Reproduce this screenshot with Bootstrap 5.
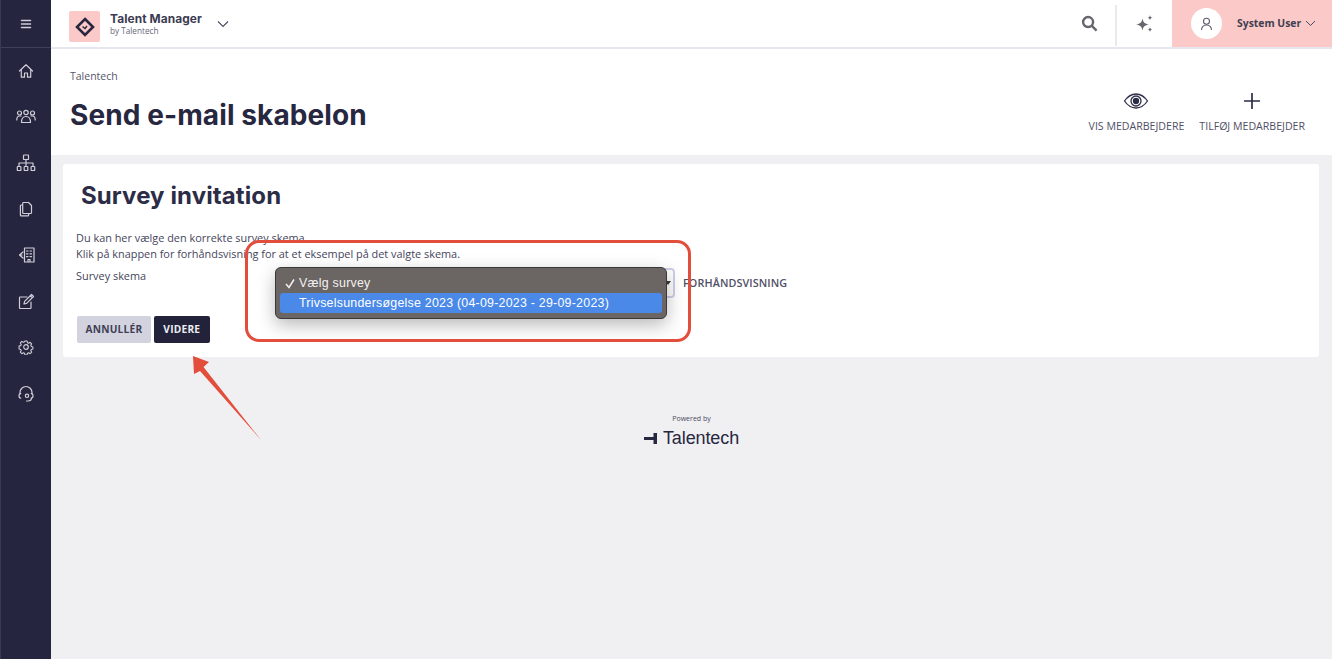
<!DOCTYPE html>
<html lang="da"><head><meta charset="utf-8"><title>Send e-mail skabelon</title>
<link href="https://cdn.jsdelivr.net/npm/bootstrap@5.3.0/dist/css/bootstrap.min.css" rel="stylesheet">
<style>
html,body{height:100%}
body{font-family:"Open Sans","Liberation Sans",sans-serif;color:#3f3f55;background:#f0f0f3;font-size:11px;overflow:hidden}
.app-shell{height:659px}
.side-rail{width:51px;background:#25253f;color:#cfcfd8;flex:none;border-left:1px solid #3a3a52}
.rail-top{height:48px;border-bottom:1px solid #3f3f5a}
.rail-item{height:46px;width:100%}
.side-rail svg{display:block;fill:none;stroke:currentColor;stroke-width:1.2;stroke-linecap:round;stroke-linejoin:round}
.top-bar{height:49px;background:#fff;border-bottom:2px solid #e6e6ee;padding-left:18px}
.logo-box{width:31px;height:31px;background:#fcc9c9;border-radius:2px;margin-top:6px}
.brand-text{margin-left:10px}
.brand-a{font:700 11.9px/13px Inter,sans-serif;color:#3b3b52;letter-spacing:.1px}
.brand-b{font-size:8.2px;line-height:10px;color:#66667a;margin-top:1px}
.brand-chev{margin-left:15px}
.top-ic{height:47px;color:#66666f}
.ic-search{width:56px;padding-left:4px}
.ic-spark{width:55px}
.top-div{border-left:2px solid #e9e9ee;height:41px;margin-top:3px}
.user-box{width:160px;height:47px;background:#fcc9c9;padding-left:19px;color:#3f3f50}
.user-dot{width:31px;height:31px;border-radius:50%;background:#fff;color:#5c5c70;margin-right:15px}
.user-name{font-weight:700;font-size:10.4px}
.page-head{height:106px;background:#fff;padding:20px 27px 0 19px}
.crumb{font-size:10.5px;line-height:15px;color:#55556a}
.page-title{font:700 28px/34px Inter,sans-serif;color:#27273f;margin:14px 0 0;letter-spacing:.1px}
.head-act{font-size:10.6px;line-height:14px;color:#4f4f66}
.head-act svg{display:block;margin:0 auto 9px;fill:none;stroke:#2d2d48}
.actions{gap:15px;padding-top:23px}
.main-card{background:#fff;margin:9px 13px 0 12px;height:193px;border-radius:3px;padding:17px 12px 0 13px}
.card-head{font:700 24px/30px Inter,sans-serif;color:#2c2c46;margin:0 0 0 5px;letter-spacing:.1px}
.intro{margin-top:19px;line-height:16px;font-size:10.9px;color:#45455c}
.form-line{margin-top:6px}
.form-lab{width:199px;font-size:10.9px;line-height:16px;color:#45455c}
.sel-box{width:400px;height:30px;border:2px solid #cfcfe8;border-radius:4px;background:#fff;padding-right:2px}
.preview{font-size:10.8px;font-weight:600;color:#4f4f66;margin:7px 0 0 8px;letter-spacing:.1px}
.btn-row{gap:3px;margin:18px 0 0 1px}
.btn-a,.btn-v{font-size:10.2px;font-weight:700;height:27px;padding:0 8.5px;border-radius:2px;border:0;letter-spacing:.2px}
.btn-v{padding:0 9.5px}
.btn-a{background:#d3d3e0;color:#3f3f55}
.btn-v{background:#22223b;color:#ececf2}
.powered{margin-top:57px;color:#4a4a60}
.powered small{display:block;font-size:7px;line-height:10px}
.tl-logo{font:400 18px/22px "Liberation Sans",sans-serif;color:#27273f;margin-top:3px;letter-spacing:-.1px}
.tl-mark{width:13px;height:11px;margin-right:6px}
.note-box{position:absolute;left:245px;top:240px;width:446px;height:102px;border:3px solid #e34d3b;border-radius:14px;pointer-events:none;z-index:3}
.os-menu{position:absolute;left:275px;top:267px;width:392px;height:52px;background:#6b6563;border:1px solid #3a3838;border-radius:6px;box-shadow:0 6px 18px rgba(0,0,0,.28);z-index:2;padding:5px 4px 0;color:#f4f2f1;font:12.4px/20px "Liberation Sans",sans-serif;letter-spacing:.24px}
.os-row{height:20px;padding-left:19px;border-radius:3px;position:relative;white-space:nowrap}
.os-row.on{background:#4a89e8;color:#fff}
.os-check{position:absolute;left:4px;top:0}
.note-arrow{position:absolute;left:188px;top:352px;z-index:3}
</style></head>
<body>
<div class="d-flex app-shell">
 <nav class="side-rail d-flex flex-column align-items-center">
  <div class="rail-top w-100 d-flex align-items-center justify-content-center">
   <svg width="12" height="12" viewBox="0 0 12 12" style="stroke-width:1.5"><path d="M1.500 2.500h9M1.500 6h9M1.500 9.500h9"/></svg>
  </div>
  <div class="w-100 d-flex flex-column align-items-center">
   <div class="rail-item d-flex align-items-center justify-content-center"><svg width="16" height="16" viewBox="0 0 16 16"><path d="M1.500 8 8 1.800 14.500 8M3.300 6.800v7.400h3.200V10h3v4.200h3.200V6.800"/></svg></div>
   <div class="rail-item d-flex align-items-center justify-content-center"><svg width="20" height="16" viewBox="0 4 20 16"><circle cx="3.500" cy="8" r="2"/><circle cx="10" cy="7.500" r="2.200"/><circle cx="16.500" cy="8" r="2"/><path d="M.8 15c0-2.500 1-4 2.700-4h1.500M19.200 15c0-2.500-1-4-2.700-4H15M5.500 17.500c0-4 1.700-6 4.500-6s4.500 2 4.500 6z"/></svg></div>
   <div class="rail-item d-flex align-items-center justify-content-center"><svg width="20" height="18" viewBox="0 0 20 18"><rect x="7.500" y="1" width="5" height="4.500" rx=".6"/><path d="M10 5.500V9M3 12.500V9h14v3.500M10 9v3.500"/><rect x="1.300" y="12.500" width="3.600" height="4" rx=".6"/><rect x="8.200" y="12.500" width="3.600" height="4" rx=".6"/><rect x="15.100" y="12.500" width="3.600" height="4" rx=".6"/></svg></div>
   <div class="rail-item d-flex align-items-center justify-content-center"><svg width="16" height="16" viewBox="0 0 16 16"><path d="M5.500 1.500h5l3 3v7.200a.8.8 0 0 1-.8.8H5.500a.8.8 0 0 1-.8-.8V2.300a.8.8 0 0 1 .8-.8zM4.700 4H3.300a.9.900 0 0 0-.9.900v9a.9.900 0 0 0 .9.900h6.500a.9.900 0 0 0 .9-.9v-1.400"/></svg></div>
   <div class="rail-item d-flex align-items-center justify-content-center"><svg width="17" height="16" viewBox="0 0 17 16"><path d="M6.500 15V1h9.500v14zM5 5 1.500 8 5 11M1.500 8h2.500M8.500 4h1.500M12 4h1.500M8.500 6.800h1.500M12 6.800h1.500M8.500 9.600h1.500M12 9.600h1.500M10 15v-2.500h2V15"/></svg></div>
   <div class="rail-item d-flex align-items-center justify-content-center"><svg width="17" height="17" viewBox="0 0 17 17"><path d="M13 9v5.800a.7.700 0 0 1-.7.700H2.200a.7.700 0 0 1-.7-.7V4.700a.7.700 0 0 1 .7-.7H9"/><path d="m6 11 .6-2.600L13.500 1.500l2 2-6.900 6.900zM12.300 2.700l2 2"/></svg></div>
   <div class="rail-item d-flex align-items-center justify-content-center"><svg width="16" height="16" viewBox="0 0 16 16"><circle cx="8" cy="8" r="2.300"/><path d="M6.800 1.300h2.400l.4 1.900 1.300.6 1.700-1 1.700 1.700-1 1.700.6 1.300 1.800.4v2.400l-1.800.4-.6 1.300 1 1.700-1.700 1.700-1.700-1-1.300.5-.4 1.900H6.800l-.4-1.900-1.300-.5-1.700 1-1.700-1.700 1-1.700-.6-1.300-1.800-.4V6.900l1.800-.4.600-1.300-1-1.700 1.700-1.700 1.700 1 1.300-.6z" transform="translate(.8 .8) scale(.9)"/></svg></div>
   <div class="rail-item d-flex align-items-center justify-content-center"><svg width="16" height="17" viewBox="0 0 16 17"><path d="M2 9V7.500a6 6 0 0 1 12 0V9"/><path d="M2.800 8.500a1.800 2.300 0 0 0 0 4.600"/><path d="M13.200 8.500a1.800 2.300 0 0 1 0 4.600"/><circle cx="9" cy="10.800" r="1.700"/><path d="M13.500 13c0 2-1.500 3-3.500 3H8.500"/></svg></div>
  </div>
 </nav>
 <div class="flex-grow-1 d-flex flex-column">
  <header class="top-bar d-flex align-items-center">
   <div class="logo-box d-flex align-items-center justify-content-center">
    <svg width="20" height="20" viewBox="0 0 20 20" fill="none" stroke="#27273f" stroke-width="2.600"><path d="M10 2 18 10 10 18 2 10z"/><path d="M7.500 9.500 10 11.500 12 9" stroke-width="1.500"/></svg>
   </div>
   <div class="brand-text"><div class="brand-a">Talent Manager</div><div class="brand-b">by Talentech</div></div>
   <svg class="brand-chev" width="12" height="8" viewBox="0 0 12 8" fill="none" stroke="#4a4a60" stroke-width="1.100"><path d="m1 1.500 5 5 5-5"/></svg>
   <div class="ms-auto d-flex align-items-center">
    <div class="top-ic ic-search d-flex align-items-center justify-content-center">
     <svg width="17" height="17" viewBox="0 0 18 18" fill="none" stroke="#66666f" stroke-width="2.600"><circle cx="7.500" cy="7.500" r="5.300"/><path d="m11.500 11.500 5 5"/></svg>
    </div>
    <div class="top-div"></div>
    <div class="top-ic ic-spark d-flex align-items-center justify-content-center">
     <svg width="18" height="18" viewBox="0 0 18 18" fill="#66666f"><path d="M6.500 3.500C7.300 7.500 8.500 8.700 13 9.500c-4.500.8-5.700 2-6.500 6-.8-4-2-5.200-6.500-6 4.500-.8 5.700-2 6.500-6zM14 0c.3 1.800.9 2.400 2.700 2.700C14.900 3 14.300 3.600 14 5.400c-.3-1.800-.9-2.400-2.700-2.700C13.100 2.400 13.700 1.800 14 0zM14 12c.3 1.700.8 2.200 2.500 2.500-1.700.3-2.200.8-2.500 2.500-.3-1.700-.8-2.200-2.500-2.500 1.700-.3 2.200-.8 2.500-2.500z"/></svg>
    </div>
    <div class="user-box d-flex align-items-center">
     <div class="user-dot d-flex align-items-center justify-content-center">
      <svg width="13" height="14" viewBox="0 0 13 14" fill="none" stroke="currentColor" stroke-width="1.100"><circle cx="6.500" cy="4.200" r="3"/><path d="M1.500 13c0-3 2-5 5-5s5 2 5 5"/></svg>
     </div>
     <span class="user-name">System User</span>
     <svg class="ms-1" width="11" height="7" viewBox="0 0 11 7" fill="none" stroke="#4a4a60" stroke-width="1"><path d="m1 1 4.500 4.500L10 1"/></svg>
    </div>
   </div>
  </header>
  <section class="page-head d-flex justify-content-between">
   <div><div class="crumb">Talentech</div><h1 class="page-title">Send e-mail skabelon</h1></div>
   <div class="actions d-flex">
    <div class="head-act text-center">
     <svg width="26" height="18" viewBox="0 0 26 18" stroke-width="1.300"><path d="M1.500 9C5 4 9 2 13 2s8 2 11.500 7C21 14 17 16 13 16S5 14 1.500 9z"/><circle cx="13" cy="9" r="5"/><circle cx="13" cy="9" r="2.500" fill="#2d2d48"/></svg>
     VIS MEDARBEJDERE
    </div>
    <div class="head-act text-center">
     <svg width="18" height="18" viewBox="0 0 18 18" stroke-width="1.700"><path d="M9 1v16M1 9h16"/></svg>
     TILFØJ MEDARBEJDER
    </div>
   </div>
  </section>
  <main class="main-card">
   <h2 class="card-head">Survey invitation</h2>
   <p class="intro mb-0">Du kan her vælge den korrekte survey skema<br>Klik på knappen for forhåndsvisning for at et eksempel på det valgte skema.</p>
   <div class="form-line d-flex">
    <div class="form-lab">Survey skema</div>
    <div class="sel-box d-flex align-items-center justify-content-end"><svg width="6" height="4" viewBox="0 0 6 4" fill="#3a3a3a"><path d="M0 0h6L3 4z"/></svg></div>
    <div class="preview">FORHÅNDSVISNING</div>
   </div>
   <div class="btn-row d-flex">
    <button class="btn-a" type="button">ANNULLÉR</button>
    <button class="btn-v" type="button">VIDERE</button>
   </div>
  </main>
  <footer class="powered text-center">
   <small>Powered by</small>
   <div class="tl-logo d-flex align-items-center justify-content-center">
    <svg class="tl-mark" viewBox="0 0 13 11" fill="#27273f"><rect x="0" y="4" width="13" height="3"/><rect x="9.500" y="0" width="3.500" height="11"/></svg>Talentech
   </div>
  </footer>
 </div>
</div>
<div class="os-menu">
 <div class="os-row"><svg class="os-check" width="12" height="20" viewBox="0 0 12 20" fill="none" stroke="#f4f2f1" stroke-width="1.500"><path d="m2 11 3 3.500L10 6.500"/></svg>Vælg survey</div>
 <div class="os-row on">Trivselsundersøgelse 2023 (04-09-2023 - 29-09-2023)</div>
</div>
<div class="note-box"></div>
<svg class="note-arrow" width="76" height="90" viewBox="0 0 76 90"><path d="M5 4 21 10 15.500 15 73 88 12 19 6 22z" fill="#e34d3b"/></svg>
</body></html>
